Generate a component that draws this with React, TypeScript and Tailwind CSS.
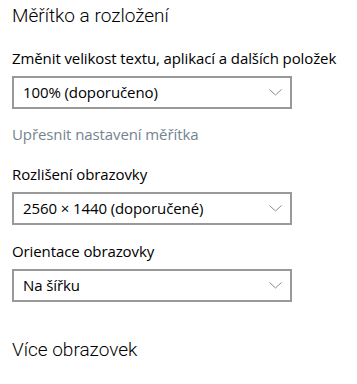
import React from "react";

function Chevron() {
  return (
    <svg width="13" height="7" viewBox="0 0 13 7" className="shrink-0">
      <path d="M0.5 0.5 L6.5 6 L12.5 0.5" fill="none" stroke="#8c8c8c" strokeWidth="1" />
    </svg>
  );
}

function Select({ value }: { value: string }) {
  return (
    <div className="flex h-[33px] w-[280px] items-center justify-between border-2 border-[#999999] pl-[9px] pr-[8px] text-[15px] tracking-[-0.1px] text-black">
      <span>{value}</span>
      <Chevron />
    </div>
  );
}

export default function App() {
  return (
    <div
      className="h-[384px] w-[357px] overflow-hidden bg-white pl-[12px] text-black"
      style={{ fontFamily: '"Open Sans", "Noto Sans", sans-serif' }}
    >
      <h1
        className="pt-[2px] text-[19px] font-light leading-[28px]"
        style={{ fontFamily: 'Roboto, "Open Sans", sans-serif' }}
      >
        Měřítko a rozložení
      </h1>
      <div className="mt-[18px] text-[15px] leading-[20px] tracking-[-0.1px]">Změnit velikost textu, aplikací a dalších položek</div>
      <div className="mt-[8px]">
        <Select value="100% (doporučeno)" />
      </div>
      <div className="mt-[15px] text-[15px] leading-[20px] tracking-[-0.1px] text-[#73848f]">Upřesnit nastavení měřítka</div>
      <div className="mt-[20px] text-[15px] leading-[20px] tracking-[-0.1px]">Rozlišení obrazovky</div>
      <div className="mt-[8px]">
        <Select value="2560 × 1440 (doporučené)" />
      </div>
      <div className="mt-[16px] text-[15px] leading-[20px] tracking-[-0.1px]">Orientace obrazovky</div>
      <div className="mt-[8px]">
        <Select value="Na šířku" />
      </div>
      <h2
        className="mt-[34px] text-[19px] font-light leading-[28px]"
        style={{ fontFamily: 'Roboto, "Open Sans", sans-serif' }}
      >
        Více obrazovek
      </h2>
    </div>
  );
}
